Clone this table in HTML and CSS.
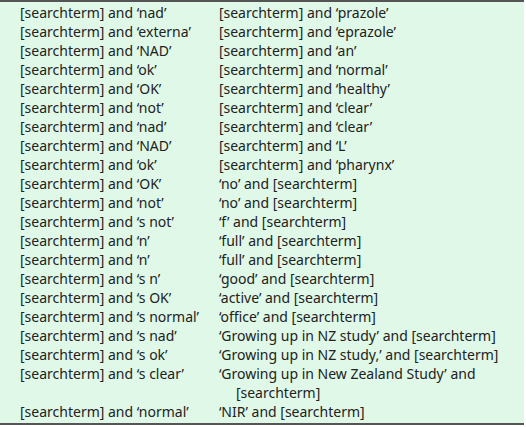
FILE: index.html
```html
<!DOCTYPE html>
<html>
<head>
<meta charset="utf-8">
<link rel="stylesheet" href="styles.css">
</head>
<body>
<div class="box">
<table class="terms">
<tr><td>[searchterm] and ‘nad’</td><td class="c2">[searchterm] and ‘prazole’</td></tr>
<tr><td>[searchterm] and ‘externa’</td><td class="c2">[searchterm] and ‘eprazole’</td></tr>
<tr><td>[searchterm] and ‘NAD’</td><td class="c2">[searchterm] and ‘an’</td></tr>
<tr><td>[searchterm] and ‘ok’</td><td class="c2">[searchterm] and ‘normal’</td></tr>
<tr><td>[searchterm] and ‘OK’</td><td class="c2">[searchterm] and ‘healthy’</td></tr>
<tr><td>[searchterm] and ‘not’</td><td class="c2">[searchterm] and ‘clear’</td></tr>
<tr><td>[searchterm] and ‘nad’</td><td class="c2">[searchterm] and ‘clear’</td></tr>
<tr><td>[searchterm] and ‘NAD’</td><td class="c2">[searchterm] and ‘L’</td></tr>
<tr><td>[searchterm] and ‘ok’</td><td class="c2">[searchterm] and ‘pharynx’</td></tr>
<tr><td>[searchterm] and ‘OK’</td><td class="c2">‘no’ and [searchterm]</td></tr>
<tr><td>[searchterm] and ‘not’</td><td class="c2">‘no’ and [searchterm]</td></tr>
<tr><td>[searchterm] and ‘s not’</td><td class="c2">‘f’ and [searchterm]</td></tr>
<tr><td>[searchterm] and ‘n’</td><td class="c2">‘full’ and [searchterm]</td></tr>
<tr><td>[searchterm] and ‘n’</td><td class="c2">‘full’ and [searchterm]</td></tr>
<tr><td>[searchterm] and ‘s n’</td><td class="c2">‘good’ and [searchterm]</td></tr>
<tr><td>[searchterm] and ‘s OK’</td><td class="c2">‘active’ and [searchterm]</td></tr>
<tr><td>[searchterm] and ‘s normal’</td><td class="c2">‘office’ and [searchterm]</td></tr>
<tr><td>[searchterm] and ‘s nad’</td><td class="c2">‘Growing up in NZ study’ and [searchterm]</td></tr>
<tr><td>[searchterm] and ‘s ok’</td><td class="c2">‘Growing up in NZ study,’ and [searchterm]</td></tr>
<tr><td>[searchterm] and ‘s clear’</td><td class="c2">‘Growing up in New Zealand Study’ and [searchterm]</td></tr>
<tr><td>[searchterm] and ‘normal’</td><td class="c2">‘NIR’ and [searchterm]</td></tr>
</table>
</div>
</body>
</html>
```
FILE: styles.css
```css
html, body {
  margin: 0;
  padding: 0;
  background: #ffffff;
}
.box {
  width: 524px;
  background: #dff8e7;
  border-top: 2px solid #555555;
  border-bottom: 2px solid #555555;
  padding: 1px 0 2px 0;
  box-sizing: border-box;
}
.terms {
  border-collapse: collapse;
  font-family: "Noto Sans", "Open Sans", sans-serif;
  font-size: 14px;
  line-height: 19px;
  color: #222222;
}
.terms td {
  padding: 0;
  vertical-align: top;
}
.terms td:first-child {
  padding-left: 20px;
  width: 200px;
}
.terms td.c2 {
  width: 290px;
  padding-left: 17px;
  text-indent: -17px;
}
```
